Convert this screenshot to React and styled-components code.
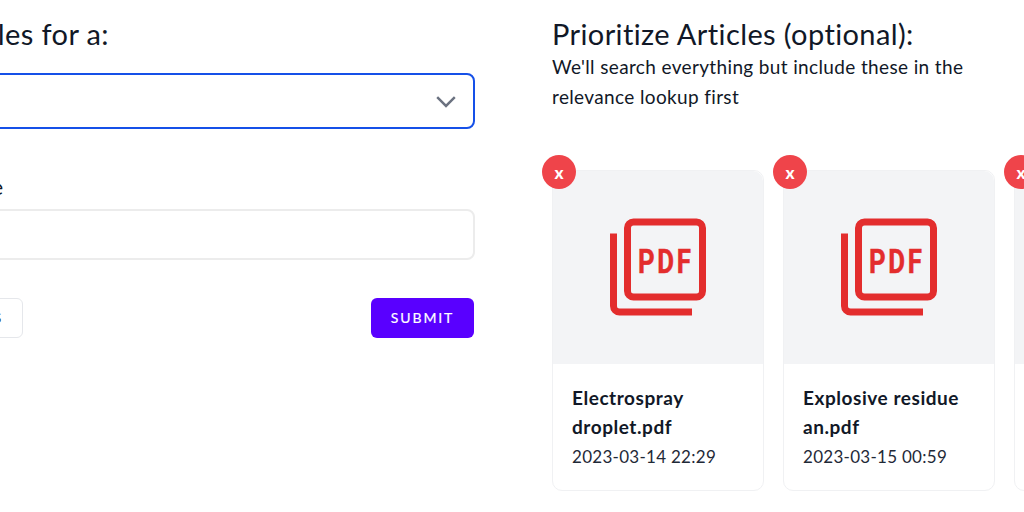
import React from 'react';
import styled, { createGlobalStyle } from 'styled-components';

const GlobalStyle = createGlobalStyle`
  html, body {
    margin: 0;
    padding: 0;
    background: #fff;
    overflow: hidden;
  }
  * {
    box-sizing: border-box;
  }
`;

const Page = styled.div`
  width: 1024px;
  height: 512px;
  overflow: hidden;
  display: flex;
  font-family: Lato, "Noto Sans", sans-serif;
  color: #111827;
`;

const LeftColumn = styled.section`
  flex: none;
  width: 600px;
  margin-left: -126px;
  margin-right: 78px;
  padding-top: 16px;
`;

const RightColumn = styled.section`
  flex: none;
  width: 560px;
  padding-top: 16px;
`;

const Heading = styled.h2`
  margin: 0;
  font-size: 29px;
  font-weight: 400;
  line-height: 36px;
  letter-spacing: 0.39px;
  white-space: nowrap;
`;

const LeftHeading = styled(Heading)`
  text-align: right;
  padding-right: 365px;
`;

const Description = styled.p`
  margin: 0;
  width: 430px;
  font-size: 19px;
  line-height: 30px;
  letter-spacing: 0.36px;
`;

const SelectBox = styled.div`
  height: 56px;
  margin-top: 21px;
  margin-right: -1px;
  border: 2px solid #1550e8;
  border-radius: 8px;
  display: flex;
  align-items: center;
  justify-content: flex-end;
  padding-right: 16px;
`;

const Chevron = styled.svg`
  width: 22px;
  height: 22px;
  fill: none;
  stroke: #6b7280;
  stroke-width: 2.2;
`;

const FieldLabel = styled.label`
  display: block;
  margin-top: 44px;
  padding-right: 471px;
  text-align: right;
  font-size: 21px;
  line-height: 28px;
`;

const TextInput = styled.div`
  height: 51px;
  margin-top: 8px;
  margin-right: -0.5px;
  border: 2px solid #ececec;
  border-radius: 8px;
`;

const ButtonRow = styled.div`
  display: flex;
  justify-content: space-between;
  margin-top: 38px;
`;

const OutlineButton = styled.button`
  width: 149px;
  height: 40px;
  border: 1px solid #e5e7eb;
  border-radius: 6px;
  background: #fff;
  color: #111827;
  font: 400 14px/1 Lato, sans-serif;
  letter-spacing: 1.9px;
  text-transform: uppercase;
  padding: 0 19px 0 0;
  text-align: right;
  -webkit-text-stroke: 0.2px currentColor;
`;

const SubmitButton = styled.button`
  width: 103px;
  height: 40px;
  border: 0;
  border-radius: 6px;
  background: #5900ff;
  color: #fff;
  font: 400 14px/1 Lato, sans-serif;
  letter-spacing: 1.9px;
  text-transform: uppercase;
  padding: 0;
  -webkit-text-stroke: 0.2px currentColor;
`;

const CardRow = styled.div`
  display: flex;
  gap: 19.5px;
  margin-top: 58px;
`;

const Card = styled.article`
  position: relative;
  flex: none;
  width: 211.5px;
  height: 321px;
  border: 1px solid #f0f1f3;
  border-radius: 10px;
  background: #fff;
`;

const Thumb = styled.div`
  height: 193px;
  background: #f3f4f6;
  border-radius: 10px 10px 0 0;
  display: flex;
  align-items: center;
  justify-content: center;
`;

const PdfIcon = styled.svg`
  width: 98px;
  height: 98px;
  margin-bottom: 2px;
  fill: none;
  stroke: #e32d2d;
`;

const PdfLabel = styled.text`
  fill: #e32d2d;
  stroke: #e32d2d;
  stroke-width: 0.5px;
  font-family: Roboto, sans-serif;
  font-weight: 700;
  font-size: 34px;
  letter-spacing: 3.5px;
`;

const RemoveButton = styled.button`
  position: absolute;
  top: -16px;
  left: -11px;
  width: 34px;
  height: 34px;
  border: 0;
  border-radius: 50%;
  background: #ef444a;
  color: #fff;
  font: 900 17px/1 Lato, sans-serif;
  padding: 0;
`;

const CardBody = styled.div`
  padding: 19px 19px 0;
`;

const FileName = styled.div`
  font-size: 19px;
  font-weight: 700;
  line-height: 29px;
  letter-spacing: 0.55px;
`;

const FileDate = styled.div`
  margin-top: 2px;
  font-size: 17px;
  line-height: 28px;
  letter-spacing: 0.28px;
  color: #1f2937;
`;

const files = [
  { name: 'Electrospray droplet.pdf', date: '2023-03-14 22:29' },
  { name: 'Explosive residue an.pdf', date: '2023-03-15 00:59' },
  { name: 'Mass spectra review.pdf', date: '2023-03-15 01:12' },
];

function PdfGlyph() {
  return (
    <PdfIcon viewBox="0 0 98 98">
      <rect x="18.5" y="4" width="75" height="75" rx="6" strokeWidth="7" />
      <path d="M4.5 15.5V88a6 6 0 0 0 6 6H83" strokeWidth="7" />
      <PdfLabel transform="translate(29 54.5) scale(0.76 1)">PDF</PdfLabel>
    </PdfIcon>
  );
}

export default function App() {
  return (
    <Page>
      <GlobalStyle />
      <LeftColumn>
        <LeftHeading>Articles for a:</LeftHeading>
        <SelectBox>
          <Chevron viewBox="0 0 20 20">
            <path d="M2 6.5l8 8 8-8" />
          </Chevron>
        </SelectBox>
        <FieldLabel>Purpose</FieldLabel>
        <TextInput />
        <ButtonRow>
          <OutlineButton>Filters</OutlineButton>
          <SubmitButton>Submit</SubmitButton>
        </ButtonRow>
      </LeftColumn>
      <RightColumn>
        <Heading>Prioritize Articles (optional):</Heading>
        <Description>
          We'll search everything but include these in the relevance lookup first
        </Description>
        <CardRow>
          {files.map((file) => (
            <Card key={file.name}>
              <RemoveButton type="button">x</RemoveButton>
              <Thumb>
                <PdfGlyph />
              </Thumb>
              <CardBody>
                <FileName>{file.name}</FileName>
                <FileDate>{file.date}</FileDate>
              </CardBody>
            </Card>
          ))}
        </CardRow>
      </RightColumn>
    </Page>
  );
}
